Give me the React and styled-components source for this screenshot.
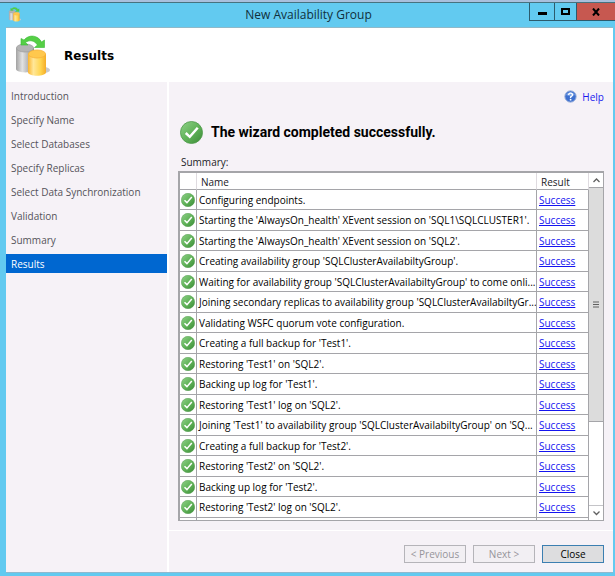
import styled, { createGlobalStyle, css } from 'styled-components'

const GlobalStyle = createGlobalStyle`
  * {
    box-sizing: border-box;
  }

  body {
    margin: 0;
    font-family: 'Open Sans', 'Noto Sans', sans-serif;
    font-size: 10px;
    line-height: 14px;
    color: #1b1b1f;
  }

  button {
    font: inherit;
    padding: 0;
  }
`

const Window = styled.div`
  display: flex;
  flex-direction: column;
  height: 100vh;
  padding: 0 2px 3px 6px;
  background: #62caf0;
  border-top: 2px solid #a9bfdc;
`

const TitleBar = styled.header`
  display: grid;
  grid-template-columns: 80px 1fr 86px;
  align-items: start;
  height: 25px;
  margin: 0 -2px 0 -6px;
  padding-left: 8px;
  border-top: 1px solid #47727f;
  flex-shrink: 0;
`

const TitleIcon = styled.div`
  padding-top: 4px;
  line-height: 0;
`

const WindowTitle = styled.div`
  padding-top: 3px;
  font-size: 12px;
  line-height: 18px;
  text-align: center;
  color: #10303c;
`

const WindowButtons = styled.div`
  display: grid;
  grid-template-columns: 25px 22px 39px;
  height: 18px;
`

const WindowButton = styled.button`
  display: flex;
  align-items: center;
  justify-content: center;
  border: 1px solid #2c5b6d;
  border-width: 0 0 1px 1px;
  background: ${props => (props.$danger ? '#c75850' : '#62caf0')};
  color: #000;
`

const Banner = styled.div`
  display: flex;
  align-items: center;
  gap: 14px;
  height: 55px;
  padding: 2px 0 0 10px;
  background: #fff;
  border-top: 1px solid #8fb9c9;
  flex-shrink: 0;
`

const PageTitle = styled.h1`
  margin: 0;
  font-family: 'DejaVu Sans', sans-serif;
  font-size: 12px;
  line-height: 18px;
  color: #000;
`

const Body = styled.div`
  display: flex;
  flex: 1;
  min-height: 0;
  background: #f6f2f7;
  border-bottom: 1px solid #8fb9cf;
`

const Sidebar = styled.nav`
  width: 163px;
  padding-top: 4px;
  border-right: 2px solid #fff;
  flex-shrink: 0;
`

const Step = styled.a`
  display: block;
  height: 19px;
  margin-bottom: 5px;
  padding: 3px 5px;
  color: #55535a;
  text-decoration: none;

  ${props =>
    props.$active &&
    css`
      background: #0067d0;
      color: #fff;
    `}
`

const Content = styled.main`
  display: flex;
  flex-direction: column;
  flex: 1;
  min-width: 0;
`

const Results = styled.section`
  display: flex;
  flex-direction: column;
  flex: 1;
  min-height: 0;
  padding: 7px 9px 9px;
`

const HelpLink = styled.a`
  display: flex;
  align-items: center;
  align-self: flex-end;
  gap: 5px;
  height: 15px;
  color: #1a1aee;
  text-decoration: none;
`

const Outcome = styled.div`
  display: flex;
  align-items: center;
  gap: 8px;
  height: 24px;
  margin-top: 16px;
  padding-left: 2px;
`

const OutcomeText = styled.h2`
  margin: 0;
  font-family: Roboto, 'Liberation Sans', sans-serif;
  font-size: 14px;
  line-height: 18px;
  color: #000;
`

const SummaryLabel = styled.div`
  margin: 11px 0 2px;
  padding-left: 3px;
`

const Grid = styled.div`
  display: flex;
  flex: 1;
  min-height: 0;
  border: 1px solid #a5a5a9;
  border-width: 2px 1px 1px 2px;
  background: #fff;
`

const Viewport = styled.div`
  flex: 1;
  min-width: 0;
  overflow: hidden;
`

const Table = styled.table`
  width: 100%;
  table-layout: fixed;
  border-collapse: separate;
  border-spacing: 0;
`

const IconCol = styled.col`
  width: 17px;
`

const ResultCol = styled.col`
  width: 52px;
`

const HeadCell = styled.th`
  height: 17px;
  padding: 1px 4px 0;
  font-weight: 400;
  line-height: 14px;
  text-align: left;
  border-right: 1px solid #dfdbe0;
  border-bottom: 1px solid #a5a5a9;
`

const Row = styled.tr`
  height: 20px;

  &:nth-child(even) {
    height: 21px;
  }
`

const Cell = styled.td`
  padding: 0 0 0 2px;
  border-right: 1px solid #a5a5a9;
  border-bottom: 1px solid #a5a5a9;
  white-space: nowrap;
  overflow: hidden;
  color: #000;
`

const IconCell = styled(Cell)`
  padding: 0 1px;
  line-height: 0;
`

const ResultLink = styled.a`
  color: #1414f0;
  text-decoration: underline;
`

const ScrollBar = styled.div`
  display: flex;
  flex-direction: column;
  width: 14px;
  flex-shrink: 0;
`

const ScrollButton = styled.button`
  display: flex;
  align-items: center;
  justify-content: center;
  height: 14px;
  border: 0;
  background: #fff;
  color: #606060;
`

const ScrollTrack = styled.div`
  flex: 1;
  border-bottom: 1px solid #c4c4c8;
`

const ScrollThumb = styled.div`
  display: flex;
  align-items: center;
  justify-content: center;
  height: 74%;
  background: #dcdcdc;
  border: 1px solid #a5a5a9;
  border-width: 1px 0;
`

const Footer = styled.footer`
  display: flex;
  justify-content: flex-end;
  gap: 7px;
  height: 42px;
  padding: 14px 9px 0;
  border-top: 1px solid #fff;
  flex-shrink: 0;
`

const FooterButton = styled.button`
  width: 62px;
  height: 18px;
  line-height: 14px;
  border: 1px solid #3c7fb1;
  background: #dddddf;
  color: #000;

  &:disabled {
    border-color: #b5b4b9;
    background: #f2eff3;
    color: #96949a;
  }
`

const steps = [
  'Introduction',
  'Specify Name',
  'Select Databases',
  'Specify Replicas',
  'Select Data Synchronization',
  'Validation',
  'Summary',
  'Results',
]

const tasks = [
  'Configuring endpoints.',
  "Starting the 'AlwaysOn_health' XEvent session on 'SQL1\\SQLCLUSTER1'.",
  "Starting the 'AlwaysOn_health' XEvent session on 'SQL2'.",
  "Creating availability group 'SQLClusterAvailabiltyGroup'.",
  "Waiting for availability group 'SQLClusterAvailabiltyGroup' to come onli...",
  "Joining secondary replicas to availability group 'SQLClusterAvailabiltyGr...",
  'Validating WSFC quorum vote configuration.',
  "Creating a full backup for 'Test1'.",
  "Restoring 'Test1' on 'SQL2'.",
  "Backing up log for 'Test1'.",
  "Restoring 'Test1' log on 'SQL2'.",
  "Joining 'Test1' to availability group 'SQLClusterAvailabiltyGroup' on 'SQ...",
  "Creating a full backup for 'Test2'.",
  "Restoring 'Test2' on 'SQL2'.",
  "Backing up log for 'Test2'.",
  "Restoring 'Test2' log on 'SQL2'.",
]

function DatabaseIcon({ width, height }) {
  return (
    <svg width={width} height={height} viewBox="0 0 34 42" aria-hidden="true">
      <defs>
        <linearGradient id="silver">
          <stop offset="0" stopColor="#a2a2a2" />
          <stop offset="0.35" stopColor="#e2e2e2" />
          <stop offset="1" stopColor="#858585" />
        </linearGradient>
        <linearGradient id="gold">
          <stop offset="0" stopColor="#fbb52f" />
          <stop offset="0.3" stopColor="#ffe79a" />
          <stop offset="0.7" stopColor="#ffd54f" />
          <stop offset="1" stopColor="#f5ac28" />
        </linearGradient>
      </defs>
      <ellipse cx="28" cy="35" rx="6" ry="3" fill="#c9c9cd" />
      <path d="M0 13v21c0 4 17 5 18 0V13z" fill="url(#silver)" />
      <ellipse cx="9" cy="13" rx="8.600" ry="4" fill="#b4b4b4" stroke="#a0a0a0" strokeWidth="0.800" />
      <path d="M12 19v18c0 5 18 5 18 0V19z" fill="url(#gold)" />
      <ellipse cx="21" cy="19" rx="8.600" ry="4" fill="#ffc84d" stroke="#f8b23a" strokeWidth="0.800" />
      <path
        d="M5 3.500v6.500h7l-2.500-2.500c4-3 9-2 12 2.500l-3 2.500h10V5l-3 2C22 0 13-1 8 5z"
        fill="#55cf45"
        stroke="#3bb935"
        strokeWidth="0.600"
      />
    </svg>
  )
}

function SuccessIcon({ size }) {
  return (
    <svg width={size} height={size} viewBox="0 0 24 24" aria-hidden="true">
      <defs>
        <linearGradient id="green" x1="0" y1="0" x2="1" y2="1">
          <stop offset="0" stopColor="#8fd088" />
          <stop offset="0.5" stopColor="#62b45a" />
          <stop offset="1" stopColor="#3b8b37" />
        </linearGradient>
      </defs>
      <circle cx="12" cy="12" r="11.500" fill="url(#green)" stroke="#4b9847" strokeWidth="0.800" />
      <path d="M6 12.500l4.200 4L18.500 7" fill="none" stroke="#fff" strokeWidth="2.600" />
    </svg>
  )
}

function HelpIcon() {
  return (
    <svg width="13" height="13" viewBox="0 0 13 13" aria-hidden="true">
      <circle cx="6.500" cy="6.500" r="5.700" fill="#3e70cf" stroke="#a3b6dc" />
      <path d="M2 5a5 5 0 0 1 9 0q-4 2-9 0z" fill="#7fa6e8" />
      <path d="M4.700 5q0-1.900 1.900-1.900T8.500 4.900q0 1-1.900 2V8" fill="none" stroke="#fff" strokeWidth="1.400" />
      <circle cx="6.600" cy="9.700" r="0.900" fill="#fff" />
    </svg>
  )
}

function Chevron({ down }) {
  return (
    <svg width="7" height="5" viewBox="0 0 7 5" aria-hidden="true">
      <path
        d={down ? 'M0.500 0.500l3 3 3-3' : 'M0.500 4l3-3 3 3'}
        fill="none"
        stroke="currentColor"
        strokeWidth="1.300"
      />
    </svg>
  )
}

export default function App() {
  return (
    <>
      <GlobalStyle />
      <Window>
        <TitleBar>
          <TitleIcon>
            <DatabaseIcon width={14} height={15} />
          </TitleIcon>
          <WindowTitle>New Availability Group</WindowTitle>
          <WindowButtons>
            <WindowButton aria-label="Minimize">
              <svg width="9" height="9">
                <path d="M0 5h9v3H0z" />
              </svg>
            </WindowButton>
            <WindowButton aria-label="Maximize">
              <svg width="9" height="8">
                <path d="M1 1h7v5H1z" fill="none" stroke="#000" strokeWidth="2" />
              </svg>
            </WindowButton>
            <WindowButton $danger aria-label="Close window">
              <svg width="8" height="8">
                <path d="M1 0.500l6 7M7 0.500l-6 7" stroke="#000" strokeWidth="2" />
              </svg>
            </WindowButton>
          </WindowButtons>
        </TitleBar>

        <Banner>
          <DatabaseIcon width={34} height={42} />
          <PageTitle>Results</PageTitle>
        </Banner>

        <Body>
          <Sidebar>
            {steps.map(step => (
              <Step key={step} href="#" $active={step === 'Results'}>
                {step}
              </Step>
            ))}
          </Sidebar>

          <Content>
            <Results>
              <HelpLink href="#">
                <HelpIcon />
                Help
              </HelpLink>
              <Outcome>
                <SuccessIcon size={23} />
                <OutcomeText>The wizard completed successfully.</OutcomeText>
              </Outcome>
              <SummaryLabel id="summary">Summary:</SummaryLabel>
              <Grid>
                <Viewport>
                  <Table aria-labelledby="summary">
                    <colgroup>
                      <IconCol />
                      <col />
                      <ResultCol />
                    </colgroup>
                    <thead>
                      <tr>
                        <HeadCell />
                        <HeadCell>Name</HeadCell>
                        <HeadCell>Result</HeadCell>
                      </tr>
                    </thead>
                    <tbody>
                      {tasks.map(task => (
                        <Row key={task}>
                          <IconCell>
                            <SuccessIcon size={14} />
                          </IconCell>
                          <Cell>{task}</Cell>
                          <Cell>
                            <ResultLink href="#">Success</ResultLink>
                          </Cell>
                        </Row>
                      ))}
                      <Row>
                        <IconCell>
                          <SuccessIcon size={14} />
                        </IconCell>
                        <Cell />
                        <Cell />
                      </Row>
                    </tbody>
                  </Table>
                </Viewport>
                <ScrollBar>
                  <ScrollButton aria-label="Scroll up">
                    <Chevron />
                  </ScrollButton>
                  <ScrollTrack>
                    <ScrollThumb>
                      <svg width="6" height="7" aria-hidden="true">
                        <path d="M0 1h6M0 3.500h6M0 6h6" stroke="#606060" />
                      </svg>
                    </ScrollThumb>
                  </ScrollTrack>
                  <ScrollButton aria-label="Scroll down">
                    <Chevron down />
                  </ScrollButton>
                </ScrollBar>
              </Grid>
            </Results>
            <Footer>
              <FooterButton disabled>&lt; Previous</FooterButton>
              <FooterButton disabled>Next &gt;</FooterButton>
              <FooterButton>Close</FooterButton>
            </Footer>
          </Content>
        </Body>
      </Window>
    </>
  )
}
